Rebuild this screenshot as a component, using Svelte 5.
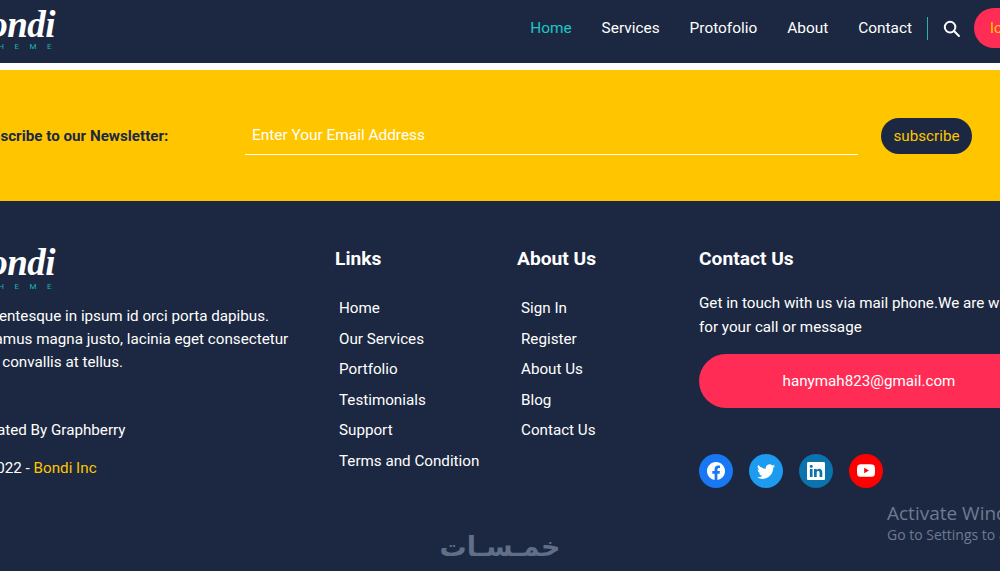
<script>
  const navItems = ['Home', 'Services', 'Protofolio', 'About', 'Contact'];
  const linkItems = ['Home', 'Our Services', 'Portfolio', 'Testimonials', 'Support', 'Terms and Condition'];
  const aboutItems = ['Sign In', 'Register', 'About Us', 'Blog', 'Contact Us'];
  const socials = [
    { name: 'Facebook', color: '#1877f2', d: 'M16 8.049c0-4.446-3.582-8.05-8-8.05C3.58 0-.002 3.603-.002 8.05c0 4.017 2.926 7.347 6.75 7.951v-5.625h-2.03V8.05H6.75V6.275c0-2.017 1.195-3.131 3.022-3.131.876 0 1.791.157 1.791.157v1.98h-1.009c-.993 0-1.303.621-1.303 1.258v1.51h2.218l-.354 2.326H9.25V16c3.824-.604 6.75-3.934 6.75-7.951z' },
    { name: 'Twitter', color: '#1d9bf0', d: 'M5.026 15c6.038 0 9.341-5.003 9.341-9.334 0-.14 0-.282-.006-.422A6.685 6.685 0 0 0 16 3.542a6.658 6.658 0 0 1-1.889.518 3.301 3.301 0 0 0 1.447-1.817 6.533 6.533 0 0 1-2.087.793A3.286 3.286 0 0 0 7.875 6.03a9.325 9.325 0 0 1-6.767-3.429 3.289 3.289 0 0 0 1.018 4.382A3.323 3.323 0 0 1 .64 6.575v.045a3.288 3.288 0 0 0 2.632 3.218 3.203 3.203 0 0 1-.865.115 3.23 3.23 0 0 1-.614-.057 3.283 3.283 0 0 0 3.067 2.277A6.588 6.588 0 0 1 .78 13.58a6.32 6.32 0 0 1-.78-.045A9.344 9.344 0 0 0 5.026 15z' },
    { name: 'LinkedIn', color: '#0a72ad', d: 'M0 1.146C0 .513.526 0 1.175 0h13.65C15.474 0 16 .513 16 1.146v13.708c0 .633-.526 1.146-1.175 1.146H1.175C.526 16 0 15.487 0 14.854V1.146zm4.943 12.248V6.169H2.542v7.225h2.401zm-1.2-8.212c.837 0 1.358-.554 1.358-1.248-.015-.709-.52-1.248-1.342-1.248-.822 0-1.359.54-1.359 1.248 0 .694.521 1.248 1.327 1.248h.016zm4.908 8.212V9.359c0-.216.016-.432.08-.586.173-.431.568-.878 1.232-.878.869 0 1.216.662 1.216 1.634v3.865h2.401V9.25c0-2.22-1.184-3.252-2.764-3.252-1.274 0-1.845.7-2.165 1.193v.025h-.016a5.54 5.54 0 0 1 .016-.025V6.169h-2.4c.03.678 0 7.225 0 7.225h2.4z' },
    { name: 'YouTube', color: '#ff0000', d: 'M8.051 1.999h.089c.822.003 4.987.033 6.11.335a2.01 2.01 0 0 1 1.415 1.42c.101.38.172.883.22 1.402l.01.104.022.26.008.104c.065.914.073 1.77.074 1.957v.075c-.001.194-.01 1.108-.082 2.06l-.008.105-.009.104c-.05.572-.124 1.14-.235 1.558a2.007 2.007 0 0 1-1.415 1.42c-1.16.312-5.569.334-6.18.335h-.142c-.309 0-1.587-.006-2.927-.052l-.17-.006-.087-.004-.171-.007-.171-.007c-1.11-.049-2.167-.128-2.654-.26a2.007 2.007 0 0 1-1.415-1.419c-.111-.417-.185-.986-.235-1.558L.09 9.82l-.008-.104A31.4 31.4 0 0 1 0 7.68v-.123c.002-.215.01-.958.064-1.778l.007-.103.003-.052.008-.104.022-.26.01-.104c.048-.519.119-1.023.22-1.402a2.007 2.007 0 0 1 1.415-1.42c.487-.13 1.544-.21 2.654-.26l.17-.007.172-.006.086-.003.171-.007A99.788 99.788 0 0 1 7.858 2h.193zM6.4 5.209v4.818l4.157-2.408L6.4 5.209z' }
  ];
</script>

<div class="page">
  <header class="topbar">
    <div class="logo">
      <span class="logo-name">Bondi</span>
      <span class="logo-sub">THEME</span>
    </div>
    <nav class="nav">
      {#each navItems as item, i}
        <a href="#top" class:active={i === 0}>{item}</a>
      {/each}
      <span class="divider"></span>
      <svg class="search" width="17" height="17" viewBox="0 0 24 24" fill="none" stroke="currentColor" stroke-width="2.8" stroke-linecap="round">
        <circle cx="10" cy="10" r="7.5"/>
        <path d="m15.6 15.6 6.9 6.9"/>
      </svg>
      <button class="login">login</button>
    </nav>
  </header>

  <section class="newsletter">
    <label class="news-label" for="email">Subscribe to our Newsletter:</label>
    <input id="email" class="news-input" type="text" placeholder="Enter Your Email Address" />
    <button class="news-btn">subscribe</button>
  </section>

  <footer class="footer">
    <div class="col-main">
      <div class="logo">
        <span class="logo-name">Bondi</span>
        <span class="logo-sub">THEME</span>
      </div>
      <p class="intro">Pellentesque in ipsum id orci porta dapibus.<br />Vivamus magna justo, lacinia eget consectetur<br />sed convallis at tellus.</p>
      <p class="credit">Created By Graphberry</p>
      <p class="copy">© 2022 - <span>Bondi Inc</span></p>
    </div>

    <div class="col">
      <h4>Links</h4>
      <ul>
        {#each linkItems as item}
          <li>{item}</li>
        {/each}
      </ul>
    </div>

    <div class="col">
      <h4>About Us</h4>
      <ul>
        {#each aboutItems as item}
          <li>{item}</li>
        {/each}
      </ul>
    </div>

    <div class="col-contact">
      <h4>Contact Us</h4>
      <p class="contact-text">Get in touch with us via mail phone.We are waiting<br />for your call or message</p>
      <a class="mail" href="#top">hanymah823@gmail.com</a>
      <div class="socials">
        {#each socials as s}
          <span class="social" style="background: {s.color}" aria-label={s.name}>
            <svg width="18" height="18" viewBox="0 0 16 16" fill="#fff"><path d={s.d}/></svg>
          </span>
        {/each}
      </div>
    </div>
  </footer>

  <div class="watermark" dir="rtl">خمـسـات</div>
  <div class="activate">
    <div class="activate-title">Activate Windows</div>
    <div class="activate-sub">Go to Settings to activate Windows.</div>
  </div>
</div>

<style>
  :global(body) {
    margin: 0;
    overflow: hidden;
    background: #1c2841;
  }

  .page {
    position: relative;
    width: 1000px;
    height: 571px;
    overflow: hidden;
    background: #1c2841;
    font-family: Roboto, "Liberation Sans", sans-serif;
    font-size: 15.2px;
    color: #fff;
  }

  .topbar {
    display: flex;
    align-items: center;
    justify-content: space-between;
    height: 56px;
    padding-bottom: 7px;
    margin-right: -100px;
    margin-left: -45px;
    background: #1c2841;
  }

  .logo {
    display: flex;
    flex-direction: column;
    width: 100px;
    align-items: flex-end;
  }

  .logo-name {
    font-family: "Liberation Serif", serif;
    font-style: italic;
    font-weight: 700;
    font-size: 37px;
    line-height: 34px;
    color: #fff;
    letter-spacing: -0.5px;
  }

  .logo-sub {
    font-size: 8px;
    line-height: 10px;
    letter-spacing: 10.5px;
    margin-right: -7px;
    color: #19b5b5;
    white-space: nowrap;
  }

  .topbar .logo {
    padding-top: 3px;
  }

  .nav {
    display: flex;
    align-items: center;
    gap: 30px;
    font-size: 15.4px;
  }

  .nav a {
    color: #fff;
    text-decoration: none;
  }

  .nav a.active {
    color: #1ec6c6;
  }

  .divider {
    width: 1px;
    height: 23px;
    margin-left: -15px;
    margin-right: -15px;
    background: #2fb0b0;
  }

  .search {
    color: #fff;
  }

  .login {
    width: 126px;
    height: 40px;
    margin-left: -16px;
    border: none;
    border-radius: 20px;
    background: #ff2d55;
    color: #ffc600;
    font: inherit;
    text-align: left;
    padding-left: 16px;
  }

  .newsletter {
    display: flex;
    align-items: center;
    height: 131px;
    border-top: 7px solid #fff;
    margin-left: -26px;
    background: #ffc600;
    padding-right: 28px;
  }

  .news-label {
    width: 271px;
    flex: none;
    font-weight: 700;
    color: #1c2841;
  }

  .news-input {
    width: 613px;
    height: 40px;
    box-sizing: border-box;
    flex: none;
    margin-bottom: 1px;
    padding: 0 7px;
    border: none;
    border-bottom: 1px solid #fff;
    background: transparent;
    font: inherit;
    font-size: 15.4px;
    color: #fff;
    outline: none;
  }

  .news-input::placeholder {
    color: #fff;
    opacity: 1;
  }

  .news-btn {
    margin-left: 23px;
    width: 91px;
    height: 36px;
    flex: none;
    padding: 0;
    border: none;
    border-radius: 18px;
    background: #1c2841;
    color: #ffc600;
    font: inherit;
  }

  .footer {
    display: grid;
    grid-template-columns: 364px 182px 182px 364px;
    width: 1092px;
    margin-left: -29px;
    padding-top: 44px;
  }

  .footer .logo {
    margin-left: -19px;
    padding-top: 1px;
  }

  .footer .logo-sub {
    margin-top: 2px;
  }

  .col-main {
    padding-left: 3px;
  }

  .intro {
    margin: 13px 0 0;
    line-height: 23px;
    white-space: nowrap;
  }

  .credit {
    margin: 45px 0 0;
    line-height: 23px;
  }

  .copy {
    margin: 15px 0 0 -2px;
    line-height: 23px;
  }

  .copy span {
    color: #ffc600;
  }

  h4 {
    margin: 0;
    font-size: 19.2px;
    font-weight: 700;
    line-height: 27px;
  }

  ul {
    list-style: none;
    margin: 21px 0 0;
    padding: 0 0 0 4px;
  }

  li {
    line-height: 30.6px;
  }

  .contact-text {
    margin: 19px 0 0;
    line-height: 24px;
    white-space: nowrap;
  }

  .mail {
    display: block;
    width: 340px;
    height: 54px;
    margin-top: 15px;
    border-radius: 27px;
    background: #ff2d55;
    color: #fff;
    text-decoration: none;
    line-height: 54px;
    text-align: center;
  }

  .socials {
    display: flex;
    gap: 16px;
    margin-top: 46px;
  }

  .social {
    display: flex;
    align-items: center;
    justify-content: center;
    width: 34px;
    height: 34px;
    border-radius: 50%;
  }

  .watermark {
    position: absolute;
    left: 420px;
    top: 522px;
    width: 160px;
    text-align: center;
    font-family: "DejaVu Sans", sans-serif;
    font-weight: 700;
    font-size: 27px;
    line-height: 50px;
    color: #5f6f88;
  }

  .activate {
    position: absolute;
    left: 887px;
    top: 501px;
    white-space: nowrap;
    color: #6d7a90;
  }

  .activate-title {
    font-family: "Open Sans", sans-serif;
    font-size: 19px;
    line-height: 24px;
  }

  .activate-sub {
    font-family: "Open Sans", sans-serif;
    font-size: 14px;
    line-height: 19px;
  }
</style>
